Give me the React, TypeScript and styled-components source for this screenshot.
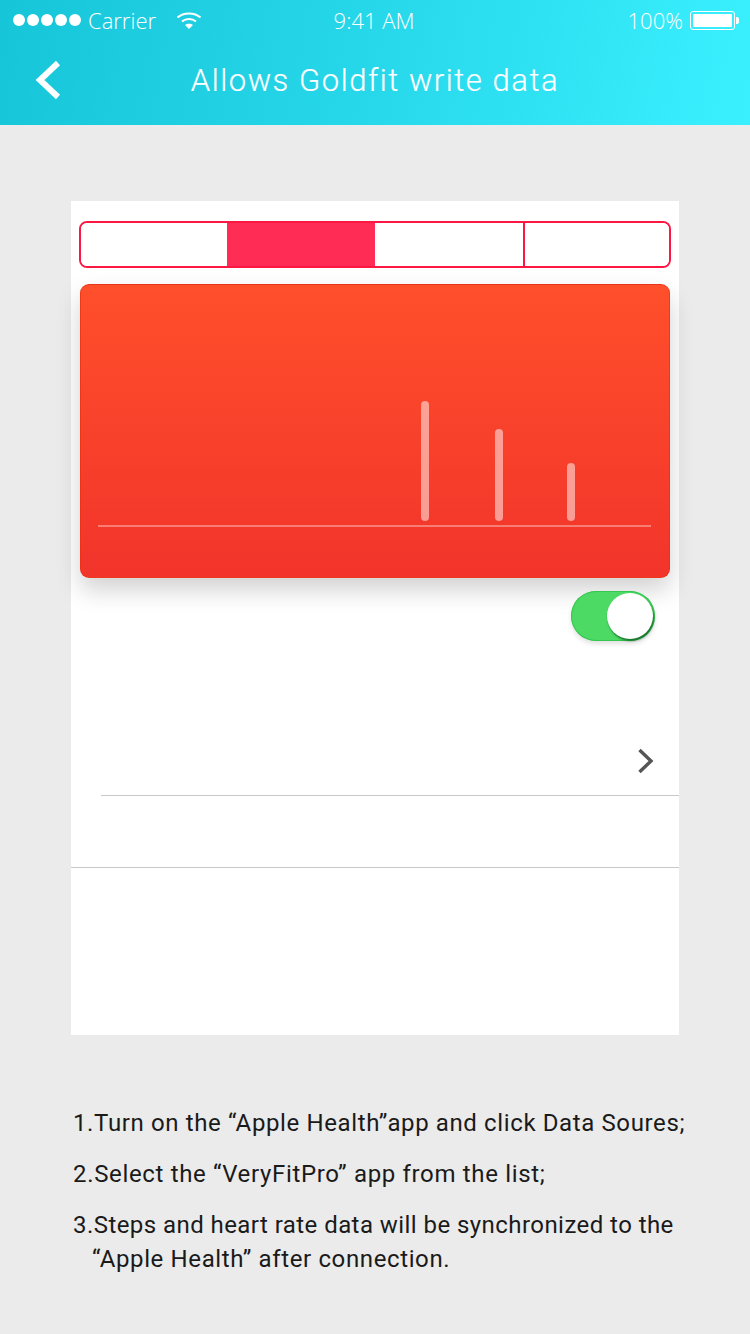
import React from "react";
import styled, { createGlobalStyle } from "styled-components";

const GlobalStyle = createGlobalStyle`
  html, body {
    margin: 0;
    padding: 0;
    background: #ebebeb;
  }
  * {
    box-sizing: border-box;
  }
`;

const Page = styled.div`
  width: 750px;
  height: 1334px;
  overflow: hidden;
  background: #ebebeb;
  font-family: "Roboto", "Liberation Sans", sans-serif;
`;

const Header = styled.header`
  height: 125px;
  background: linear-gradient(100deg, #17c5d8 0%, #27d8ea 50%, #3af0ff 100%);
  color: #ffffff;
`;

const StatusBar = styled.div`
  height: 40px;
  padding: 0 15px 0 13px;
  display: grid;
  grid-template-columns: 1fr auto 1fr;
  align-items: center;
  font-family: "Open Sans", sans-serif;
  font-weight: 300;
  font-size: 22px;
`;

const StatusLeft = styled.div`
  display: flex;
  align-items: center;
`;

const Dots = styled.div`
  display: flex;
  gap: 2px;
  margin-right: 7px;
`;

const Dot = styled.span`
  width: 12px;
  height: 12px;
  border-radius: 50%;
  background: #ffffff;
`;

const WifiIcon = styled.svg`
  width: 26px;
  height: 20px;
  margin-left: 20px;
`;

const StatusRight = styled.div`
  display: flex;
  align-items: center;
  justify-content: flex-end;
  gap: 7px;
`;

const Battery = styled.div`
  width: 45px;
  height: 19px;
  border: 1px solid #ffffff;
  border-radius: 3px;
  padding: 2px;
  position: relative;

  &::before {
    content: "";
    display: block;
    height: 100%;
    background: #ffffff;
    border-radius: 1px;
  }

  &::after {
    content: "";
    position: absolute;
    right: -5px;
    top: 5px;
    width: 3px;
    height: 7px;
    background: #ffffff;
    border-radius: 0 2px 2px 0;
  }
`;

const NavBar = styled.div`
  height: 85px;
  padding-bottom: 5px;
  position: relative;
  display: flex;
  align-items: center;
  justify-content: center;
`;

const BackIcon = styled.svg`
  position: absolute;
  left: 34px;
  top: 19px;
  width: 28px;
  height: 42px;
`;

const Title = styled.h1`
  margin: 0;
  font-size: 31px;
  font-weight: 300;
  letter-spacing: 1.55px;
  -webkit-text-stroke: 0.2px #ffffff;
`;

const Panel = styled.section`
  width: 608px;
  height: 834px;
  margin: 76px auto 0;
  padding-top: 20px;
  background: #ffffff;
  display: flex;
  flex-direction: column;
`;

const Segments = styled.div`
  margin: 0 8px;
  height: 47px;
  border: 2px solid #ff1744;
  border-radius: 8px;
  overflow: hidden;
  display: grid;
  grid-template-columns: 146px 148px 150px 1fr;
`;

const Segment = styled.div<{ $active?: boolean; $divided?: boolean }>`
  background: ${(props) => (props.$active ? "#ff2d55" : "#ffffff")};
  border-right: ${(props) => (props.$divided ? "2px solid #ff1744" : "none")};
`;

const Card = styled.div`
  margin: 16px 9px 0;
  height: 294px;
  border-radius: 9px;
  border: 1px solid rgba(230, 50, 20, 0.7);
  background: linear-gradient(180deg, #ff4f2b 0%, #f2342b 100%);
  box-shadow: 0 12px 24px rgba(0, 0, 0, 0.18);
  padding: 116px 18px 0 17px;
`;

const Bars = styled.div`
  height: 120px;
  padding-right: 76px;
  display: flex;
  justify-content: flex-end;
  align-items: flex-end;
`;

const Bar = styled.div<{ $height: number; $gap: number }>`
  width: 8px;
  height: ${(props) => props.$height}px;
  margin-right: ${(props) => props.$gap}px;
  border-radius: 4px;
  background: rgba(255, 255, 255, 0.5);
`;

const Baseline = styled.div`
  height: 1.5px;
  margin-top: 4px;
  background: rgba(255, 255, 255, 0.35);
`;

const ToggleRow = styled.div`
  margin-top: 13px;
  padding-right: 24px;
  display: flex;
  justify-content: flex-end;
`;

const Toggle = styled.div`
  width: 84px;
  height: 50px;
  border-radius: 25px;
  padding: 2px;
  background: #4cd964;
  box-shadow: inset 0 0 0 1px #34c651, 0 3px 5px rgba(0, 0, 0, 0.12);
  display: flex;
  justify-content: flex-end;
`;

const Knob = styled.div`
  width: 46px;
  height: 46px;
  border-radius: 50%;
  background: #ffffff;
  box-shadow: 1px 2px 2px rgba(0, 70, 20, 0.7);
`;

const LinkRow = styled.div`
  height: 155px;
  margin-left: 30px;
  padding: 107px 24px 0 0;
  border-bottom: 1px solid #c8c8c8;
  display: flex;
  justify-content: flex-end;
  align-items: flex-start;
`;

const ChevronIcon = styled.svg`
  width: 18px;
  height: 26px;
`;

const PlainRow = styled.div`
  height: 72px;
  border-bottom: 1px solid #c8c8c8;
`;

const Steps = styled.ol`
  list-style: none;
  margin: 71px 0 0;
  padding: 0 0 0 73px;
  color: #1a1a1a;
  font-size: 24px;
  font-weight: 400;
  white-space: nowrap;
`;

const Step = styled.li<{ $spacing: number }>`
  line-height: 34px;
  margin-bottom: 17px;
  letter-spacing: ${(props) => props.$spacing}px;
`;

const Continuation = styled.span`
  display: block;
  padding-left: 19px;
  letter-spacing: 0.62px;
`;

const App: React.FC = () => (
  <Page>
    <GlobalStyle />
    <Header>
      <StatusBar>
        <StatusLeft>
          <Dots>
            <Dot />
            <Dot />
            <Dot />
            <Dot />
            <Dot />
          </Dots>
          Carrier
          <WifiIcon viewBox="0 0 26 20" fill="none">
            <path d="M1.5 7.5C7.5 2 18.5 2 24.5 7.5" stroke="#fff" strokeWidth="2" />
            <path d="M6 11.5C10 8 16 8 20 11.5" stroke="#fff" strokeWidth="2" />
            <path d="M9 15L13 19L17 15C14.8 13.2 11.2 13.2 9 15Z" fill="#fff" />
          </WifiIcon>
        </StatusLeft>
        <div>9:41 AM</div>
        <StatusRight>
          100%
          <Battery />
        </StatusRight>
      </StatusBar>
      <NavBar>
        <BackIcon viewBox="0 0 28 42" fill="none">
          <path d="M24 4L6 21L24 38" stroke="#fff" strokeWidth="6" />
        </BackIcon>
        <Title>Allows Goldfit write data</Title>
      </NavBar>
    </Header>
    <Panel>
      <Segments>
        <Segment />
        <Segment $active />
        <Segment $divided />
        <Segment />
      </Segments>
      <Card>
        <Bars>
          <Bar $height={120} $gap={66} />
          <Bar $height={92} $gap={64} />
          <Bar $height={58} $gap={0} />
        </Bars>
        <Baseline />
      </Card>
      <ToggleRow>
        <Toggle>
          <Knob />
        </Toggle>
      </ToggleRow>
      <LinkRow>
        <ChevronIcon viewBox="0 0 18 26" fill="none">
          <path d="M2.5 2L14 13L2.5 24" stroke="#555" strokeWidth="3.4" />
        </ChevronIcon>
      </LinkRow>
      <PlainRow />
    </Panel>
    <Steps>
      <Step $spacing={0.62}>1.Turn on the “Apple Health”app and click Data Soures;</Step>
      <Step $spacing={0.66}>2.Select the “VeryFitPro” app from the list;</Step>
      <Step $spacing={0.44}>
        3.Steps and heart rate data will be synchronized to the
        <Continuation>“Apple Health” after connection.</Continuation>
      </Step>
    </Steps>
  </Page>
);

export default App;
